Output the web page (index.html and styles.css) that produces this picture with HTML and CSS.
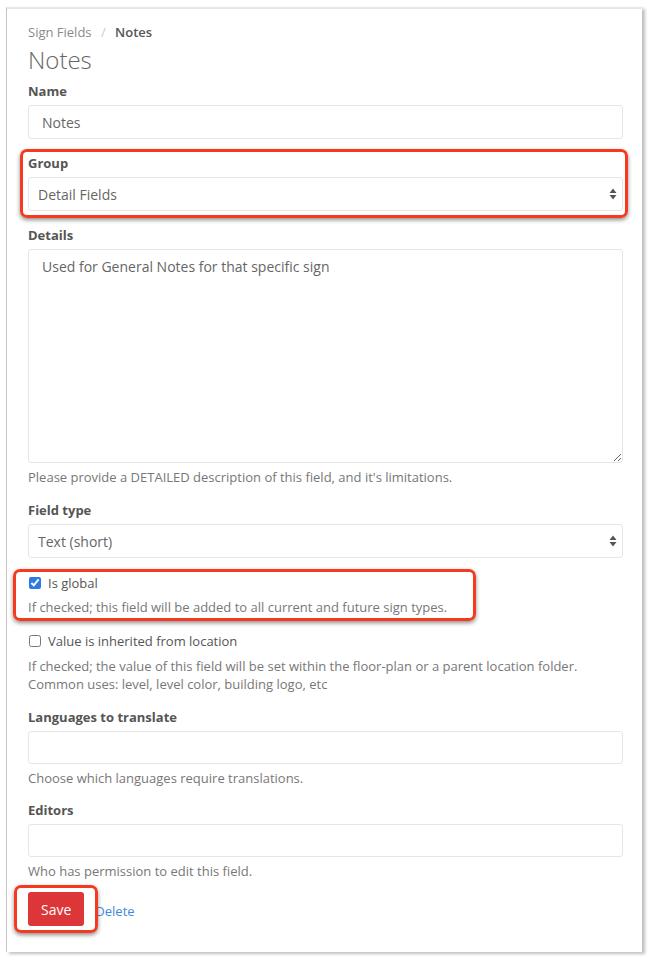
FILE: index.html
```html
<html>
<head>
    <link rel="stylesheet" href="styles.css">
</head>
<body>
<div class="window">
    <div class="crumbs">
        <span class="crumb">Sign Fields</span>
        <span class="sep">/</span>
        <span class="crumb-current">Notes</span>
    </div>
    <h1>Notes</h1>

    <div class="field">
        <label>Name</label>
        <input type="text" class="control" value="Notes">
    </div>

    <div class="field marked marked-group">
        <label>Group</label>
        <div class="select-wrap">
            <select class="control select">
                <option>Detail Fields</option>
            </select>
            <svg class="arrows" width="8" height="12" viewBox="0 0 8 12"><path d="M4 0.5 L7.5 5 L0.5 5 Z M0.5 7 L7.5 7 L4 11.5 Z" fill="#555"/></svg>
        </div>
    </div>

    <div class="field">
        <label>Details</label>
        <textarea class="control area">Used for General Notes for that specific sign</textarea>
        <p class="help">Please provide a DETAILED description of this field, and it's limitations.</p>
    </div>

    <div class="field">
        <label>Field type</label>
        <div class="select-wrap">
            <select class="control select">
                <option>Text (short)</option>
            </select>
            <svg class="arrows" width="8" height="12" viewBox="0 0 8 12"><path d="M4 0.5 L7.5 5 L0.5 5 Z M0.5 7 L7.5 7 L4 11.5 Z" fill="#555"/></svg>
        </div>
    </div>

    <div class="field marked marked-global">
        <label class="check"><input type="checkbox" checked> Is global</label>
        <p class="help">If checked; this field will be added to all current and future sign types.</p>
    </div>

    <div class="field">
        <label class="check"><input type="checkbox"> Value is inherited from location</label>
        <p class="help help-gap">If checked; the value of this field will be set within the floor-plan or a parent location folder.<br>Common uses: level, level color, building logo, etc</p>
    </div>

    <div class="field tight">
        <label>Languages to translate</label>
        <input type="text" class="control short">
        <p class="help">Choose which languages require translations.</p>
    </div>

    <div class="field">
        <label>Editors</label>
        <input type="text" class="control short">
        <p class="help">Who has permission to edit this field.</p>
    </div>

    <div class="actions">
        <span class="marked marked-save"><button class="btn-save">Save</button></span>
        <a class="delete" href="#">Delete</a>
    </div>
</div>
</body>
</html>
```

FILE: styles.css
```css
body { margin: 0; background: #fff; font-family: "Open Sans", sans-serif; font-size: 13px; color: #555; }
.window { margin: 7px 6px 0 6px; height: 945px; box-sizing: border-box; padding: 14px 19px 0 21px; border-left: 1px solid #c4c4c4; border-top: 2px solid #e6e6e6; box-shadow: 3px 2px 3px rgba(0,0,0,0.25); }

.crumbs { line-height: 18px; }
.crumb { color: #8a8a8a; }
.sep { color: #ccc; margin: 0 6px; }
.crumb-current { color: #555; font-weight: 600; }
h1 { margin: 4px 0 8px; font-size: 24px; font-weight: 300; line-height: 29px; color: #666; }

.field { margin-bottom: 15px; position: relative; }
.field.tight { margin-bottom: 14px; }
.field label { display: block; font-weight: 700; line-height: 18px; margin-bottom: 5px; color: #555; }
.control { display: block; width: 100%; box-sizing: border-box; height: 34px; border: 1px solid #e6e6e6; border-radius: 3px; padding: 0 13px; font-family: "Open Sans", sans-serif; font-size: 14px; color: #666; background: #fff; }
.short { height: 33px; }
.select-wrap { position: relative; }
.select { appearance: none; -webkit-appearance: none; padding-left: 9px; }
.arrows { position: absolute; right: 6px; top: 11px; }
.area { height: 214px; padding: 7px 13px; line-height: 20px; resize: vertical; }
.help { margin: 5px 0 0; line-height: 18px; color: #777; }
.help-gap { margin-top: 7px; }

.field label.check { font-weight: 400; display: flex; align-items: center; gap: 7px; margin-bottom: 6px; }
.check input { margin: 0 0 0 1px; width: 12px; height: 12px; accent-color: #2c7be5; }

.marked { position: relative; }
.marked::after { content: ""; position: absolute; border: 3px solid #f53a1f; border-radius: 7px; box-shadow: 0 2px 4px rgba(0,0,0,0.45); pointer-events: none; }
.marked-group::after { top: -5px; bottom: -7px; left: -8px; right: -5px; }
.marked-global { width: fit-content; margin-top: 16px; margin-bottom: 16px; }
.marked-global::after { top: -5px; bottom: -5px; left: -15px; right: -29px; }
.marked-save { display: inline-block; }
.marked-save::after { top: -7px; bottom: -7px; left: -14px; right: -14px; }

.actions { display: flex; align-items: center; gap: 11px; margin-top: -3px; }
.btn-save { display: block; height: 34px; padding: 0 13px; border: none; border-radius: 3px; background: #dc3638; color: #fff; font-family: "Open Sans", sans-serif; font-size: 14px; }
.delete { color: #3d8bd8; text-decoration: none; margin-top: 3px; }
```
